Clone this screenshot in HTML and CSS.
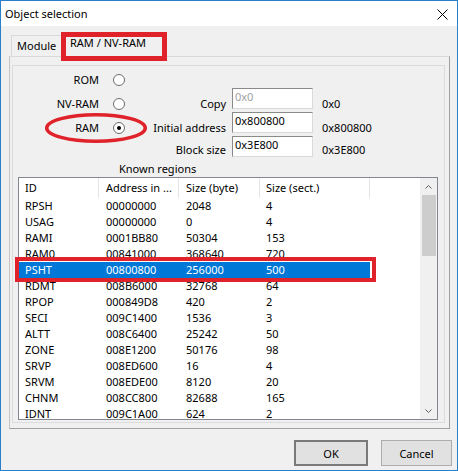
FILE: index.html
```html
<!DOCTYPE html>
<html>
<head>
<meta charset="utf-8">
<title>Object selection</title>
<link rel="stylesheet" href="styles.css">
</head>
<body>
<div class="window">
  <div class="titlebar">
    <span class="title">Object selection</span>
    <svg class="close" width="11" height="11" viewBox="0 0 11 11"><path d="M0.5 0.5L10.5 10.5M10.5 0.5L0.5 10.5" stroke="#000" stroke-width="1" fill="none"/></svg>
  </div>
  <div class="client">
    <div class="tabs">
      <div class="tab">Module</div>
      <div class="tab active">RAM / NV-RAM</div>
    </div>
    <div class="panel">
      <div class="frame">
        <div class="form">
          <span class="lbl">ROM</span><span class="radio"></span><span></span><span></span><span></span>
          <span class="lbl">NV-RAM</span><span class="radio"></span><span class="lbl">Copy</span><input class="edit disabled" value="0x0" readonly><span class="val">0x0</span>
          <span class="lbl">RAM</span><span class="radio checked"></span><span class="lbl">Initial address</span><input class="edit" value="0x800800" readonly><span class="val">0x800800</span>
          <span></span><span></span><span class="lbl">Block size</span><input class="edit" value="0x3E800" readonly><span class="val">0x3E800</span>
        </div>
        <div class="known">Known regions</div>
        <div class="listview">
          <div class="lv-main">
            <div class="lv-header">
              <div class="hc">ID</div><div class="hc">Address in ...</div><div class="hc">Size (byte)</div><div class="hc">Size (sect.)</div><div class="hc last"></div>
            </div>
            <div class="lv-body">
              <div class="row"><span>RPSH</span><span>00000000</span><span>2048</span><span>4</span></div>
              <div class="row"><span>USAG</span><span>00000000</span><span>0</span><span>4</span></div>
              <div class="row"><span>RAMI</span><span>0001BB80</span><span>50304</span><span>153</span></div>
              <div class="row"><span>RAM0</span><span>00841000</span><span>368640</span><span>720</span></div>
              <div class="row selected"><span>PSHT</span><span>00800800</span><span>256000</span><span>500</span></div>
              <div class="row"><span>RDMT</span><span>008B6000</span><span>32768</span><span>64</span></div>
              <div class="row"><span>RPOP</span><span>000849D8</span><span>420</span><span>2</span></div>
              <div class="row"><span>SECI</span><span>009C1400</span><span>1536</span><span>3</span></div>
              <div class="row"><span>ALTT</span><span>008C6400</span><span>25242</span><span>50</span></div>
              <div class="row"><span>ZONE</span><span>008E1200</span><span>50176</span><span>98</span></div>
              <div class="row"><span>SRVP</span><span>008ED600</span><span>16</span><span>4</span></div>
              <div class="row"><span>SRVM</span><span>008EDE00</span><span>8120</span><span>20</span></div>
              <div class="row"><span>CHNM</span><span>008CC800</span><span>82688</span><span>165</span></div>
              <div class="row"><span>IDNT</span><span>009C1A00</span><span>624</span><span>2</span></div>
            </div>
          </div>
          <div class="scrollbar">
            <div class="sb-btn"><svg width="7" height="4" viewBox="0 0 7 4"><path d="M0.5 3.5L3.5 0.5L6.5 3.5" stroke="#606060" fill="none"/></svg></div>
            <div class="sb-thumb"></div>
            <div class="sb-track"></div>
            <div class="sb-btn"><svg width="7" height="4" viewBox="0 0 7 4"><path d="M0.5 0.5L3.5 3.5L6.5 0.5" stroke="#606060" fill="none"/></svg></div>
          </div>
        </div>
      </div>
    </div>
    <div class="buttons">
      <button class="btn default">OK</button>
      <button class="btn">Cancel</button>
    </div>
  </div>
  <div class="mark mark-tab"></div>
  <div class="mark mark-row"></div>
  <svg class="mark-ellipse" width="104" height="32" viewBox="0 0 104 32"><ellipse cx="52" cy="16" rx="49.3" ry="13.3" fill="none" stroke="#e0222b" stroke-width="3.5"/></svg>
</div>
</body>
</html>
```

FILE: styles.css
```css
html, body {
  margin: 0;
  padding: 0;
  background: #ffffff;
}

body {
  font-family: "Noto Sans", "DejaVu Sans", sans-serif;
  font-size: 11px;
  color: #000;
}

.window {
  position: relative;
  width: 458px;
  height: 471px;
  box-sizing: border-box;
  border: 1px solid #2a80c8;
  background: #f0f0f0;
  display: flex;
  flex-direction: column;
}

.titlebar {
  flex: none;
  height: 25px;
  background: #ffffff;
  display: flex;
  align-items: center;
  padding-left: 4px;
}

.title {
  line-height: 16px;
}

.close {
  margin-left: auto;
  margin-right: 9px;
  margin-top: 1px;
}

.client {
  flex: 1;
  padding: 6px 7px 0 8px;
}

/* tabs */
.tabs {
  position: relative;
  z-index: 1;
  display: flex;
  align-items: flex-end;
  height: 25px;
  padding-left: 2px;
  margin-bottom: -1px;
}

.tab {
  box-sizing: border-box;
  border: 1px solid #d9d9d9;
  border-bottom: none;
  background: #f0f0f0;
  line-height: 20px;
  white-space: nowrap;
}

.tab:first-child {
  width: 51px;
  height: 21px;
  padding-left: 5px;
  margin-bottom: 1px;
}

.tab.active {
  width: 102px;
  height: 25px;
  padding-left: 7px;
  background: #f0f0f0;
}

.panel {
  box-sizing: border-box;
  height: 373px;
  border: 1px solid #d9d9d9;
  border-left-color: #c4c4c4;
  border-right-color: #a0a0a0;
  border-bottom-color: #a0a0a0;
  padding: 8px 4px 5px 2px;
}

.frame {
  box-sizing: border-box;
  height: 358px;
  border: 1px solid #dcdcdc;
  padding: 2px 6px 2px 5px;
}

/* form */
.form {
  display: grid;
  grid-template-columns: 81px 27px 100px 87px 1fr;
  grid-template-rows: 24px 24px 24px 20px;
  align-items: center;
}

.lbl {
  text-align: right;
  line-height: 16px;
  white-space: nowrap;
}

.radio {
  justify-self: end;
  box-sizing: border-box;
  width: 12px;
  height: 12px;
  margin-right: 1px;
  border: 1px solid #6a6a6a;
  border-radius: 50%;
  background: #fff;
  display: flex;
  align-items: center;
  justify-content: center;
}

.radio.checked::after {
  content: "";
  width: 4px;
  height: 4px;
  border-radius: 50%;
  background: #000;
}

.edit {
  justify-self: end;
  align-self: start;
  margin: -4px 0 0 0;
  box-sizing: border-box;
  width: 81px;
  height: 21px;
  padding: 0 2px 4px 2px;
  border: 1px solid;
  border-color: #8a8a8a #dadada #dadada #8a8a8a;
  background: #fff;
  font-family: "Noto Sans", "DejaVu Sans", sans-serif;
  font-size: 11px;
  color: #000;
  outline: none;
}

.edit.disabled {
  color: #a0a0a0;
}

.val {
  padding-left: 9px;
  line-height: 16px;
  white-space: nowrap;
}

.known {
  height: 17px;
  line-height: 17px;
  padding-left: 101px;
}

/* list view */
.listview {
  box-sizing: border-box;
  height: 243px;
  border: 1px solid #828790;
  background: #fff;
  display: flex;
}

.lv-main {
  flex: 1;
  overflow: hidden;
  display: flex;
  flex-direction: column;
}

.lv-header {
  flex: none;
  display: grid;
  grid-template-columns: 80px 80px 81px 110px 1fr;
  height: 20px;
}

.hc {
  box-sizing: border-box;
  border-right: 1px solid #e5e5e5;
  padding-left: 6px;
  line-height: 20px;
  white-space: nowrap;
}

.hc:nth-child(2), .hc:nth-child(3) {
  padding-left: 7px;
}

.hc.last {
  border-right: none;
}

.lv-body {
  flex: 1;
  overflow: hidden;
}

.row {
  display: grid;
  grid-template-columns: 80px 80px 81px 110px;
  width: 351px;
  height: 16px;
  line-height: 16px;
}

.row span {
  padding-left: 6px;
  white-space: nowrap;
}

.row span:nth-child(2), .row span:nth-child(3) {
  padding-left: 7px;
}

.row.selected {
  background: #0078d7;
  color: #fff;
}

.scrollbar {
  flex: none;
  width: 17px;
  background: #f0f0f0;
  display: flex;
  flex-direction: column;
}

.sb-btn {
  height: 17px;
  display: flex;
  align-items: center;
  justify-content: center;
}

.sb-thumb {
  height: 61px;
  margin: 0 1px 0 2px;
  background: #cdcdcd;
}

.sb-track {
  flex: 1;
}

/* buttons */
.buttons {
  display: flex;
  justify-content: flex-end;
  gap: 13px;
  margin-top: 11px;
  margin-right: -2px;
}

.btn {
  box-sizing: border-box;
  height: 26px;
  border: 1px solid #adadad;
  background: #e1e1e1;
  font-family: "Noto Sans", "DejaVu Sans", sans-serif;
  font-size: 11px;
  color: #000;
  padding: 0;
}

.btn.default {
  width: 74px;
  border: 2px solid #7a7a7a;
}

.btn:not(.default) {
  width: 71px;
}

/* red annotation marks drawn over the dialog */
.mark {
  position: absolute;
  z-index: 5;
  box-sizing: border-box;
  border: 5px solid #e0222b;
  pointer-events: none;
}

.mark-tab {
  left: 60px;
  top: 31px;
  width: 106px;
  height: 29px;
}

.mark-row {
  left: 14px;
  top: 256px;
  width: 361px;
  height: 25px;
  border-width: 4px;
}

.mark-ellipse {
  position: absolute;
  z-index: 5;
  left: 43px;
  top: 111px;
}
```
